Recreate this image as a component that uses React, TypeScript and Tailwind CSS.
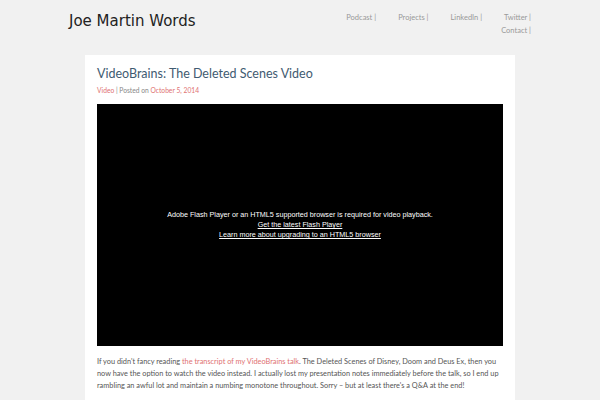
export default function App() {
  const nav = ["Podcast", "Projects", "LinkedIn", "Twitter", "Contact"];

  return (
    <div className="min-h-[400px] w-full bg-[#f1f1f1]" style={{ fontFamily: "Lato, 'Open Sans', sans-serif" }}>
      <div className="mx-auto w-[462px]">
        <header className="flex h-[55px] items-start justify-between pt-[12px]">
          <h1 className="text-[15px] leading-[18px] text-[#222]" style={{ fontFamily: "'DejaVu Sans', sans-serif" }}>
            Joe Martin Words
          </h1>
          <nav className="flex w-[192px] flex-wrap justify-end gap-x-[22px] text-[7.5px] leading-[12.5px] text-[#999]">
            {nav.map((item) => (
              <a key={item} href="#">
                {item} |
              </a>
            ))}
          </nav>
        </header>
      </div>

      <main className="mx-auto w-[430px] bg-white px-[12px] pt-[10px] pb-4">
        <h2 className="text-[12.5px] leading-[17px] text-[#3f5b71]">VideoBrains: The Deleted Scenes Video</h2>
        <p className="mt-[2px] text-[6.7px] leading-[12px] text-[#888]">
          <a href="#" className="text-[#e07272]">Video</a> | Posted on{" "}
          <a href="#" className="text-[#e07272]">October 5, 2014</a>
        </p>

        <div
          className="mt-[8px] flex h-[242px] w-full flex-col items-center justify-center bg-black text-center text-[7.2px] leading-[10px] text-white"
          style={{ fontFamily: "'Liberation Sans', Arial, sans-serif" }}
        >
          <p>Adobe Flash Player or an HTML5 supported browser is required for video playback.</p>
          <a href="#" className="text-white underline">Get the latest Flash Player </a>
          <a href="#" className="text-white underline">Learn more about upgrading to an HTML5 browser</a>
        </div>

        <p className="mt-[10px] text-[7.35px] leading-[12px] text-[#555]">
          If you didn't fancy reading{" "}
          <a href="#" className="text-[#e07272]">the transcript of my VideoBrains talk</a>. The Deleted Scenes of
          Disney, Doom and Deus Ex, then you now have the option to watch the video instead. I actually lost my
          presentation notes immediately before the talk, so I end up rambling an awful lot and maintain a numbing
          monotone throughout. Sorry – but at least there's a Q&amp;A at the end!
        </p>
      </main>
    </div>
  );
}
